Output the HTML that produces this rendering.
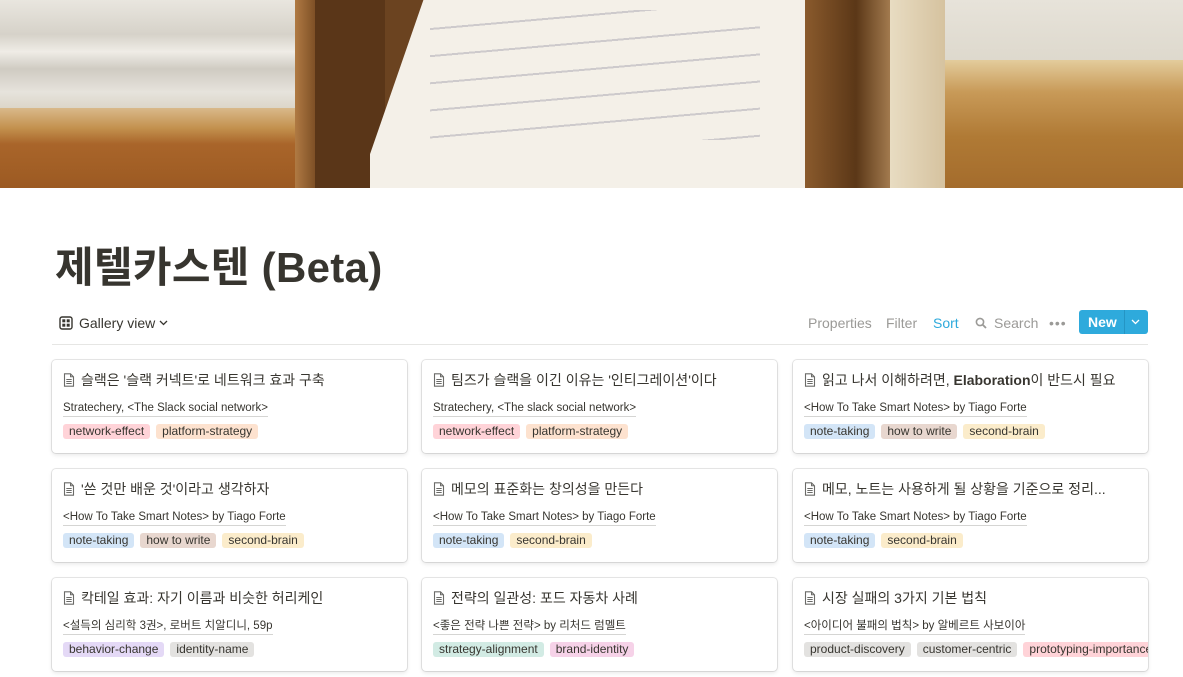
<!DOCTYPE html>
<html><head><meta charset="utf-8"><style>
*{box-sizing:border-box;margin:0;padding:0}
body{width:1183px;height:677px;overflow:hidden;background:#fff;font-family:"Liberation Sans","Noto Sans CJK KR",sans-serif;color:#37352f;position:relative}
.cover{position:absolute;left:0;top:0;width:1183px;height:188px;overflow:hidden;background:#6b4320}
.a{position:absolute}
h1{position:absolute;left:55px;top:234px;font-size:42px;font-weight:700;color:#37352f;letter-spacing:0.3px}
.tb{position:absolute;top:313px;font-size:14px;height:20px;line-height:20px}
.line{position:absolute;left:52px;top:344px;width:1096px;height:1px;background:#e6e6e4}
.card{position:absolute;width:355px;height:93px;border-radius:4px;box-shadow:0 0 0 1px rgba(15,15,15,.1),0 2px 4px rgba(15,15,15,.1);background:#fff;padding:0 11px;overflow:hidden}
.t{position:absolute;left:11px;top:10px;font-size:14px;white-space:nowrap;display:flex;align-items:center}
.t svg{margin-right:6px}
.s{position:absolute;left:11px;top:40px;font-size:11.5px;color:#37352f;border-bottom:1px solid #d5d5d3;line-height:16px;white-space:nowrap}
.tags{position:absolute;left:11px;top:64px;white-space:nowrap;font-size:12px}
.tags span{display:inline-block;height:15px;line-height:15px;padding:0 6px;border-radius:3px;margin-right:6px;color:#37352f}
.r{background:#ffd3d8}.o{background:#fde2cf}.b{background:#d3e5f7}.br{background:#e8d7cf}.y{background:#fbeccb}.p{background:#e4d9f6}.g{background:#e3e2e0}.gr{background:#d2ebe4}.pk{background:#f6d2e8}
</style></head><body>
<div class="cover">
  <div class="a" style="left:0;top:0;width:310px;height:115px;background:linear-gradient(180deg,#e9e6df 0%,#d6d2c9 30%,#efece6 45%,#cfcbc2 60%,#e6e3dc 80%,#d8d0c0 100%)"></div>
  <div class="a" style="left:0;top:108px;width:310px;height:80px;background:linear-gradient(180deg,#d9b98a 0%,#c3914e 25%,#a9652a 45%,#9c5a22 100%)"></div>
  <div class="a" style="left:295px;top:0;width:20px;height:188px;background:linear-gradient(90deg,#b07a43,#7e5026)"></div>
  <div class="a" style="left:315px;top:0;width:70px;height:188px;background:#5a3618"></div>
  <div class="a" style="left:370px;top:0;width:445px;height:188px;background:#f4f0e8;clip-path:polygon(12% 0,100% 0,98% 100%,0 100%,0 82%)"></div>
  <div class="a" style="left:430px;top:10px;width:330px;height:130px;background:repeating-linear-gradient(175deg,transparent 0 18px,rgba(90,90,120,.25) 18px 20px,transparent 20px 27px)"></div>
  <div class="a" style="left:805px;top:0;width:85px;height:188px;background:linear-gradient(90deg,#8a5a2c,#5b3717 60%,#a27a4e)"></div>
  <div class="a" style="left:890px;top:0;width:60px;height:188px;background:linear-gradient(90deg,#e8dcc2,#d4c09c)"></div>
  <div class="a" style="left:945px;top:0;width:238px;height:65px;background:linear-gradient(180deg,#e7e3da,#ddd8cc)"></div>
  <div class="a" style="left:945px;top:60px;width:238px;height:128px;background:linear-gradient(180deg,#e3cc9c 0%,#c89a58 25%,#b07a35 60%,#a46c2c 100%)"></div>
</div>
<h1>제텔카스텐 (Beta)</h1>
<div class="tb" style="left:59px;display:flex;align-items:center;font-weight:500">
<svg width="14" height="14" viewBox="0 0 14 14"><rect x="1" y="1" width="12" height="12" rx="2" fill="none" stroke="#37352f" stroke-width="1.4"/><rect x="3.3" y="3.3" width="3" height="3" fill="#37352f"/><rect x="7.7" y="3.3" width="3" height="3" fill="#37352f"/><rect x="3.3" y="7.7" width="3" height="3" fill="#37352f"/><rect x="7.7" y="7.7" width="3" height="3" fill="#37352f"/></svg>
<span style="margin-left:6px">Gallery view</span><svg style="margin-left:4px" width="9" height="6" viewBox="0 0 9 6"><path d="M1 1l3.5 3.5L8 1" fill="none" stroke="#37352f" stroke-width="1.3"/></svg></div>
<div class="tb" style="left:808px;color:#9b9a97">Properties</div>
<div class="tb" style="left:886px;color:#9b9a97">Filter</div>
<div class="tb" style="left:933px;color:#2eaadc">Sort</div>
<div class="tb" style="left:975px;color:#9b9a97;display:flex;align-items:center"><svg width="12" height="12" viewBox="0 0 12 12"><circle cx="5" cy="5" r="3.6" fill="none" stroke="#9b9a97" stroke-width="1.6"/><path d="M7.6 7.6L11 11" stroke="#9b9a97" stroke-width="1.8"/></svg><span style="margin-left:7px">Search</span></div>
<div class="tb" style="left:1049px;color:#9b9a97;font-size:14px;letter-spacing:1px">•••</div>
<div class="a" style="left:1079px;top:310px;width:69px;height:24px;background:#2eaadc;border-radius:3px;color:#fff;font-weight:700;font-size:14px;line-height:24px"><span style="position:absolute;left:9px">New</span><div style="position:absolute;left:45px;top:0;width:1px;height:24px;background:#2495c4"></div><svg style="position:absolute;left:52px;top:9px" width="9" height="6" viewBox="0 0 9 6"><path d="M1 1l3.5 3.5L8 1" fill="none" stroke="#fff" stroke-width="1.3"/></svg></div>
<div class="line"></div>

<svg width="0" height="0" style="position:absolute"><defs><symbol id="d" viewBox="0 0 12 14"><path d="M1.5 .8h6l3 3v9.4h-9z" fill="none" stroke="#6b6b68" stroke-width="1.1"/><path d="M7.5 .8v3h3" fill="none" stroke="#6b6b68" stroke-width="1"/><path d="M3.3 6.5h5.4M3.3 8.5h5.4M3.3 10.5h5.4" stroke="#6b6b68" stroke-width="1"/></symbol></defs></svg>

<div class="card" style="left:52px;top:360px"><div class="t"><svg width="12" height="14"><use href="#d"/></svg>슬랙은 '슬랙 커넥트'로 네트워크 효과 구축</div><div class="s">Stratechery, &lt;The Slack social network&gt;</div><div class="tags"><span class="r">network-effect</span><span class="o">platform-strategy</span></div></div>
<div class="card" style="left:422px;top:360px"><div class="t"><svg width="12" height="14"><use href="#d"/></svg>팀즈가 슬랙을 이긴 이유는 '인티그레이션'이다</div><div class="s">Stratechery, &lt;The slack social network&gt;</div><div class="tags"><span class="r">network-effect</span><span class="o">platform-strategy</span></div></div>
<div class="card" style="left:793px;top:360px"><div class="t"><svg width="12" height="14"><use href="#d"/></svg>읽고 나서 이해하려면,&nbsp;<b style="font-weight:600">Elaboration</b>이 반드시 필요</div><div class="s">&lt;How To Take Smart Notes&gt; by Tiago Forte</div><div class="tags"><span class="b">note-taking</span><span class="br">how to write</span><span class="y">second-brain</span></div></div>

<div class="card" style="left:52px;top:469px"><div class="t"><svg width="12" height="14"><use href="#d"/></svg>'쓴 것만 배운 것'이라고 생각하자</div><div class="s">&lt;How To Take Smart Notes&gt; by Tiago Forte</div><div class="tags"><span class="b">note-taking</span><span class="br">how to write</span><span class="y">second-brain</span></div></div>
<div class="card" style="left:422px;top:469px"><div class="t"><svg width="12" height="14"><use href="#d"/></svg>메모의 표준화는 창의성을 만든다</div><div class="s">&lt;How To Take Smart Notes&gt; by Tiago Forte</div><div class="tags"><span class="b">note-taking</span><span class="y">second-brain</span></div></div>
<div class="card" style="left:793px;top:469px"><div class="t"><svg width="12" height="14"><use href="#d"/></svg>메모, 노트는 사용하게 될 상황을 기준으로 정리...</div><div class="s">&lt;How To Take Smart Notes&gt; by Tiago Forte</div><div class="tags"><span class="b">note-taking</span><span class="y">second-brain</span></div></div>

<div class="card" style="left:52px;top:578px"><div class="t"><svg width="12" height="14"><use href="#d"/></svg>칵테일 효과: 자기 이름과 비슷한 허리케인</div><div class="s">&lt;설득의 심리학 3권&gt;, 로버트 치알디니, 59p</div><div class="tags"><span class="p">behavior-change</span><span class="g">identity-name</span></div></div>
<div class="card" style="left:422px;top:578px"><div class="t"><svg width="12" height="14"><use href="#d"/></svg>전략의 일관성: 포드 자동차 사례</div><div class="s">&lt;좋은 전략 나쁜 전략&gt; by 리처드 럼멜트</div><div class="tags"><span class="gr">strategy-alignment</span><span class="pk">brand-identity</span></div></div>
<div class="card" style="left:793px;top:578px"><div class="t"><svg width="12" height="14"><use href="#d"/></svg>시장 실패의 3가지 기본 법칙</div><div class="s">&lt;아이디어 불패의 법칙&gt; by 알베르트 사보이아</div><div class="tags"><span class="g">product-discovery</span><span class="g">customer-centric</span><span class="r">prototyping-importance</span></div></div>
</body></html>
